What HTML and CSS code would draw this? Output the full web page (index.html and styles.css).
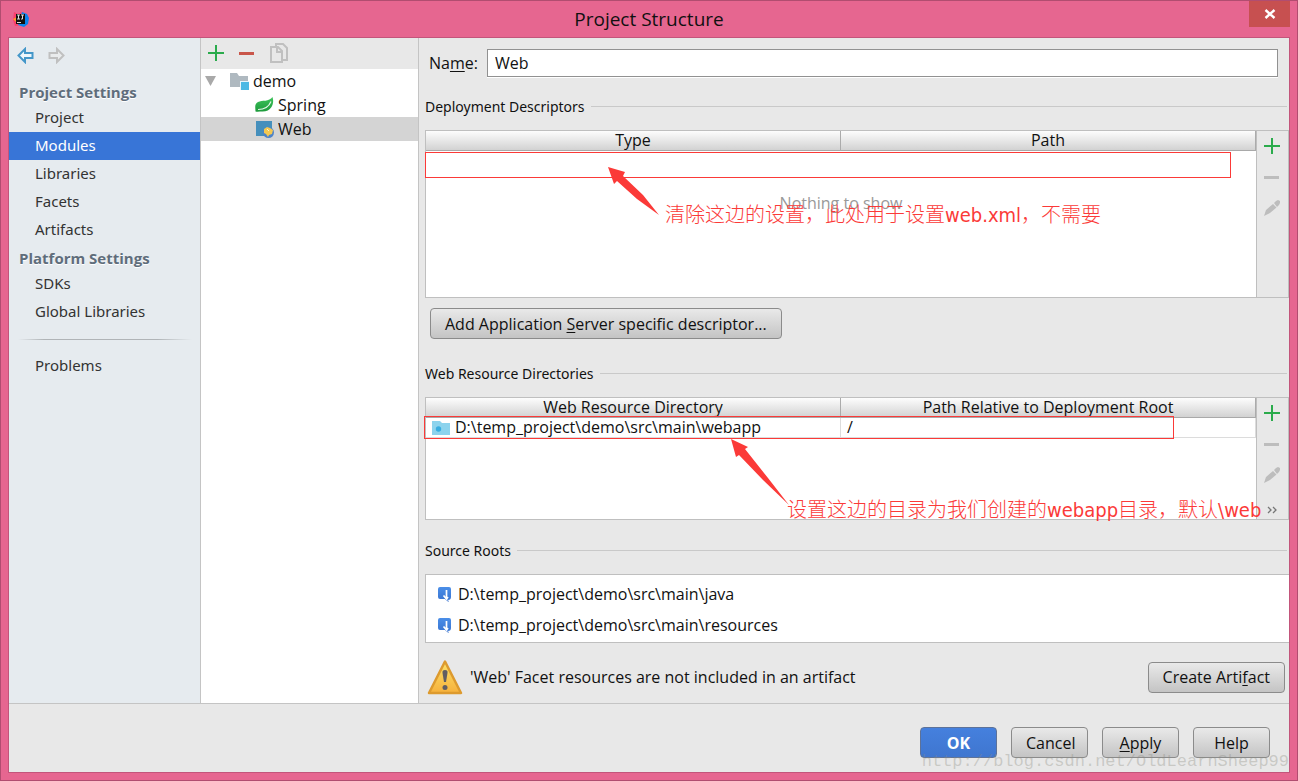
FILE: index.html
```html
<!DOCTYPE html>
<html lang="en">
<head>
<meta charset="utf-8">
<title>Project Structure</title>
<link rel="stylesheet" href="styles.css">
</head>
<body>
<svg class="defs" aria-hidden="true">
  <defs>
    <linearGradient id="blue" x1="0" y1="0" x2="0" y2="1"><stop offset="0" stop-color="#4a8ee8"/><stop offset="1" stop-color="#3873cf"/></linearGradient>
    <linearGradient id="amber" x1="0" y1="0" x2="0" y2="1"><stop offset="0" stop-color="#fde26a"/><stop offset="1" stop-color="#f6b13c"/></linearGradient>
    <linearGradient id="leaf" x1="0" y1="0" x2="0" y2="1"><stop offset="0" stop-color="#3fc45c"/><stop offset="1" stop-color="#1d9a3c"/></linearGradient>
  </defs>
  <symbol id="plus" viewBox="0 0 16 16"><path d="M7 0h2v7h7v2H9v7H7V9H0V7h7z" fill="#2bab4c"/></symbol>
  <symbol id="minus" viewBox="0 0 16 16"><path d="M0 7h15v3H0z" fill="currentColor"/></symbol>
  <symbol id="pencil" viewBox="0 0 16 16"><path d="M0 16l2-6 7-6 3.500 3.500L6 13zM10 3l2-2 2-1 2 1v2l-1 2-2 2z" fill="#bdbdbd"/></symbol>
  <symbol id="source" viewBox="0 0 14 16"><path d="M2 1h9q2 0 2 2v8q0 3-3 3l1 2-2-1-2-2H2q-2 0-2-2V3q0-2 2-2z" fill="url(#blue)"/><path d="M8.500 4v9L5.500 9.500M8.500 13L10 11" fill="none" stroke="#fff" stroke-width="1.700"/></symbol>
</svg>
<div class="window">
  <header class="titlebar">
    <svg class="app-icon" width="16" height="16" viewBox="0 0 16 16"><path d="M1 1l4 2 3-2 2 3v10l-8 1-2-6z" fill="#fb3e6c"/><path d="M0 8l4-2v6z" fill="#fb9b28"/><path d="M9 1l5 2 2 4-1 6-4 3-6-2z" fill="#0a83ee"/><path d="M3 3h9v10H3z" fill="#111"/><path d="M4 4h3M5.500 4v4M4 8h3M8 4h3M9.500 4v4H8M4 11.500h4" fill="none" stroke="#ddd"/></svg>
    <h1>Project Structure</h1>
    <button class="close" aria-label="Close"><svg width="12" height="10" viewBox="0 0 12 10"><path d="M1.500 1l9 8M10.500 1l-9 8" stroke="#fff" stroke-width="2.400"/></svg></button>
  </header>
  <div class="frame">
    <div class="panes">
      <nav class="sidebar">
        <div class="history">
          <button aria-label="Back"><svg width="17" height="17" viewBox="0 0 17 17"><path d="M1.500 8.500L8 2v4h7.500v5H8v4z" fill="#eef7fc" stroke="#4497c9" stroke-width="2"/></svg></button>
          <button aria-label="Forward" disabled><svg width="17" height="17" viewBox="0 0 17 17"><path d="M15.500 8.500L9 2v4H1.500v5H9v4z" fill="#eaeced" stroke="#c0c0c0" stroke-width="2"/></svg></button>
        </div>
        <h2>Project Settings</h2>
        <a href="#">Project</a>
        <a href="#" class="active">Modules</a>
        <a href="#">Libraries</a>
        <a href="#">Facets</a>
        <a href="#">Artifacts</a>
        <h2>Platform Settings</h2>
        <a href="#">SDKs</a>
        <a href="#">Global Libraries</a>
        <hr>
        <a href="#">Problems</a>
      </nav>
      <section class="tree">
        <div class="tree-tools">
          <button aria-label="Add"><svg width="16" height="16"><use href="#plus"/></svg></button>
          <button class="remove" aria-label="Remove"><svg width="16" height="16"><use href="#minus"/></svg></button>
          <button aria-label="Copy"><svg width="18" height="20" viewBox="0 0 18 20"><path d="M6 4V1h7l4 4v12h-4" fill="none" stroke="#c0c0c0" stroke-width="2"/><path d="M1 4h7l4 4v11H1zM7 4v5h5" fill="#e8e8e8" stroke="#c0c0c0" stroke-width="2"/></svg></button>
        </div>
        <ul>
          <li><svg class="twisty" width="11" height="10" viewBox="0 0 11 10"><path d="M0 0h11L5.500 10z" fill="#a9a9a9"/></svg><svg width="19" height="18" viewBox="0 0 19 18"><path d="M0 1h7l2 3h9v11H0z" fill="#afb9c0"/><path d="M10 9h9v9h-9z" fill="#e9f6fc"/><path d="M11 10h8v8h-8z" fill="#4db9e4"/></svg>demo</li>
          <li class="child"><svg width="19" height="18" viewBox="0 0 19 18"><path d="M17.500 1c1 3 1 7-1 10-2 3-5 4.500-9 4.500-2.500 0-5 .5-7 0C.5 12-1 8 3 6c4-2 11 0 14.500-5z" fill="url(#leaf)"/><path d="M3 13.500c6 0 11-3 13-8" fill="none" stroke="#e5f6e8" stroke-width="1.200"/></svg>Spring</li>
          <li class="child selected"><svg width="19" height="18" viewBox="0 0 19 18"><path d="M1 1h16v15H1z" fill="#458fbc"/><circle cx="13.500" cy="12.500" r="5.500" fill="#4d83c9"/><path d="M9 9l3-2 3 1 3 2-1 4-3 1-1 2-2-3-2-1z" fill="#f4c851"/><path d="M12 9l2 2" stroke="#fff5c8"/></svg>Web</li>
        </ul>
      </section>
      <main class="editor">
        <div class="name-row"><label for="name">Na<u>m</u>e:</label><input id="name" type="text" value="Web"></div>
        <h3>Deployment Descriptors</h3>
        <section class="box descriptors">
          <div class="grid">
            <table><thead><tr><th>Type</th><th>Path</th></tr></thead></table>
            <p class="empty">Nothing to show</p>
          </div>
          <div class="tools">
            <button aria-label="Add"><svg width="16" height="16"><use href="#plus"/></svg></button>
            <button aria-label="Remove" disabled><svg width="16" height="16"><use href="#minus"/></svg></button>
            <button aria-label="Edit" disabled><svg width="16" height="16"><use href="#pencil"/></svg></button>
          </div>
          <div class="mark mark-descriptors"></div>
          <svg class="arrow arrow-descriptors" width="54" height="52" viewBox="0 0 54 52"><path d="M1 1L18 6l-2 4 20 19 16 20-22-16-20-18-3 3z" fill="#fb3a38"/></svg>
          <p class="note note-descriptors">清除这边的设置，此处用于设置web.xml，不需要</p>
        </section>
        <button class="btn add-descriptor">Add Application <u>S</u>erver specific descriptor...</button>
        <h3>Web Resource Directories</h3>
        <section class="box resources">
          <div class="grid">
            <table>
              <thead><tr><th>Web Resource Directory</th><th>Path Relative to Deployment Root</th></tr></thead>
              <tbody><tr><td><span class="path"><svg width="18" height="14" viewBox="0 0 18 14"><path d="M0 0h8l2 2h8v12H0z" fill="#8cd3ed"/><circle cx="6.500" cy="8" r="2.700" fill="#38ade0"/></svg>D:\temp_project\demo\src\main\webapp</span></td><td>/</td></tr></tbody>
            </table>
          </div>
          <div class="tools">
            <button aria-label="Add"><svg width="16" height="16"><use href="#plus"/></svg></button>
            <button aria-label="Remove" disabled><svg width="16" height="16"><use href="#minus"/></svg></button>
            <button aria-label="Edit" disabled><svg width="16" height="16"><use href="#pencil"/></svg></button>
            <button class="more" aria-label="More"><svg width="10" height="8" viewBox="0 0 10 8"><path d="M1 1l3 3-3 3M6 1l3 3-3 3" fill="none" stroke="#777" stroke-width="1.300"/></svg></button>
          </div>
          <div class="mark mark-resources"></div>
          <svg class="arrow arrow-resources" width="60" height="68" viewBox="0 0 60 68"><path d="M1 1l17 8-3 2 23 29 21 27-26-25L9 17l-3 2z" fill="#fb3a38"/></svg>
          <p class="note note-resources">设置这边的目录为我们创建的webapp目录，默认\web</p>
        </section>
        <h3>Source Roots</h3>
        <ul class="roots">
          <li><svg width="14" height="16"><use href="#source"/></svg>D:\temp_project\demo\src\main\java</li>
          <li><svg width="14" height="16"><use href="#source"/></svg>D:\temp_project\demo\src\main\resources</li>
        </ul>
        <div class="warning">
          <svg width="36" height="36" viewBox="0 0 36 36"><path d="M18 2.500L34 34H2z" fill="url(#amber)" stroke="#dd9a2e" stroke-width="2.500" stroke-linejoin="round"/><path d="M18 11q3 0 2.500 3l-1.500 9h-2l-1.500-9q-.5-3 2.500-3z" fill="#625e62"/><circle cx="18" cy="28.500" r="2.500" fill="#625e62"/></svg>
          <span>'Web' Facet resources are not included in an artifact</span>
          <button class="btn">Create Arti<u>f</u>act</button>
        </div>
      </main>
    </div>
    <footer class="actions">
      <button class="btn primary">OK</button>
      <button class="btn">Cancel</button>
      <button class="btn"><u>A</u>pply</button>
      <button class="btn">Help</button>
      <span class="watermark">http://blog.csdn.net/OldLearnSheep99</span>
    </footer>
  </div>
</div>
</body>
</html>
```
FILE: styles.css
```css
* { box-sizing: border-box; }

body, h1, h2, h3, p, ul { margin: 0; padding: 0; }
ul { list-style: none; }

body {
  min-height: 100vh;
  display: flex;
  font: 16px/22px "Open Sans", "Noto Sans", sans-serif;
  color: #111;
}

button, input { font: inherit; color: inherit; }
button { border: 0; padding: 0; background: none; }
svg { display: block; flex: none; }
u { text-underline-offset: 2px; }
.defs { position: absolute; width: 0; height: 0; }

/* Window chrome */
.window {
  flex: 1;
  display: flex;
  flex-direction: column;
  padding: 0 7px 7px;
  border: 1px solid #b14d70;
  background: #e66690;
}
.titlebar {
  height: 36px;
  display: grid;
  grid-template-columns: 48px 1fr 48px;
  align-items: center;
}
.titlebar h1 { font-size: 19px; font-weight: 400; text-align: center; }
.app-icon { margin-left: 5px; }
.close {
  width: 41px;
  height: 26px;
  align-self: start;
  justify-self: end;
  display: grid;
  place-items: center;
  background: #c75050;
}
.frame {
  flex: 1;
  display: flex;
  flex-direction: column;
  border: 1px solid #c3557b;
  background: #e8e8e8;
}
.panes { flex: 1; display: grid; grid-template-columns: 192px 218px 1fr; }

/* Settings navigation */
.sidebar {
  display: flex;
  flex-direction: column;
  background: #e6ebef;
  border-right: 1px solid #c4c4c4;
}
.history { display: flex; align-items: flex-start; gap: 14px; height: 40px; padding: 9px 8px; }
.sidebar h2 {
  padding: 2px 0 0 10px;
  font-size: 15px;
  line-height: 24px;
  color: #5f6d7b;
  text-shadow: 0 1px #fff;
}
.sidebar a {
  padding: 0 0 2px 26px;
  font: 15px/26px "Noto Sans", sans-serif;
  color: #333;
  text-decoration: none;
}
.sidebar .active { background: #3875d7; color: #fff; }
.sidebar hr {
  width: 174px;
  height: 1px;
  margin: 13px auto 12px;
  border: 0;
  background: linear-gradient(90deg, transparent, #b0b4b7 15%, #b0b4b7 80%, transparent);
}

/* Module tree */
.tree { background: #fff; border-right: 1px solid #c4c4c4; }
.tree-tools {
  display: flex;
  align-items: center;
  gap: 15px;
  height: 31px;
  padding: 0 0 1px 7px;
  background: #e8e8e8;
}
.remove { color: #c9564a; }
.tree li { display: flex; align-items: center; gap: 4px; height: 24px; padding-left: 4px; }
.tree .twisty { margin-right: 10px; }
.tree .child { padding-left: 54px; }
.tree .selected { background: #d4d4d4; }

/* Facet editor */
.editor { display: flex; flex-direction: column; min-width: 0; padding: 11px 0 8px 6px; }
.name-row { display: flex; align-items: center; gap: 9px; margin: 0 11px 19px 4px; }
.name-row input {
  flex: 1;
  height: 28px;
  padding: 0 7px;
  border: 1px solid #919191;
  background: #fff;
  box-shadow: 0 1px #fff;
}
.editor h3 {
  display: flex;
  align-items: center;
  gap: 6px;
  margin-bottom: 12px;
  font: 14px/22px "Noto Sans", sans-serif;
}
.editor h3::after { content: ""; flex: 1; height: 1px; margin: 0 2px 2px 0; background: #c9c9c9; }

.box { position: relative; display: flex; border: 1px solid #bfbfbf; }
.descriptors { flex: 1 0 168px; margin-bottom: 10px; }
.resources { height: 123px; margin-bottom: 20px; }
.grid { flex: 1; background: #fff; border-right: 1px solid #bfbfbf; }
.grid table { width: 100%; table-layout: fixed; border-collapse: separate; border-spacing: 0; }
.grid th {
  height: 20px;
  padding: 0;
  line-height: 19px;
  font-weight: 400;
  background: linear-gradient(#fdfdfd, #d2d2d2);
  border-right: 1px solid #ababab;
  border-bottom: 1px solid #a9a9a9;
}
.grid td {
  height: 20px;
  padding: 0 6px;
  line-height: 19px;
  border-right: 1px solid #dcdcdc;
  border-bottom: 1px solid #dcdcdc;
}
.path { display: flex; align-items: center; gap: 5px; }
.empty { margin-top: 41px; text-align: center; color: #999; }
.tools {
  width: 31px;
  display: flex;
  flex-direction: column;
  align-items: center;
  gap: 15px;
  padding: 7px 1px 0 0;
}
.tools button:disabled { color: #bdbdbd; }
.tools .more { margin-top: 8px; }

/* Annotations laid over the tables */
.mark { position: absolute; border: 1px solid #fb3a38; }
.mark-descriptors { left: -1px; right: 57px; top: 21px; height: 26px; }
.mark-resources { left: -2px; right: 114px; top: 18px; height: 23px; }
.arrow { position: absolute; }
.arrow-descriptors { left: 181px; top: 35px; }
.arrow-resources { left: 304px; top: 40px; }
.note {
  position: absolute;
  font: 300 20px/28px "DejaVu Sans Condensed", "Noto Sans CJK SC", sans-serif;
  white-space: nowrap;
  color: #fb3a38;
}
.note-descriptors { left: 239px; top: 70px; }
.note-resources { left: 361px; top: 98px; }

.btn {
  height: 31px;
  padding: 0 14px;
  border: 1px solid #8b8b8b;
  border-radius: 4px;
  background: linear-gradient(#e9e9e9, #c4c4c4);
}
.add-descriptor { align-self: flex-start; margin: 0 0 24px 5px; }
.roots { padding: 3px 12px 2px; margin-bottom: 16px; border: 1px solid #bfbfbf; border-right: 0; background: #fff; }
.roots li { display: flex; align-items: center; gap: 6px; height: 31px; }
.warning { display: flex; align-items: center; gap: 7px; padding: 0 4px 0 2px; }
.warning span { flex: 1; }

.actions {
  position: relative;
  display: flex;
  justify-content: flex-end;
  gap: 14px;
  height: 69px;
  padding: 23px 19px 0 0;
  border-top: 1px solid #c4c4c4;
}
.actions .btn { width: 77px; }
.actions .primary {
  font-weight: 700;
  color: #fff;
  border-color: #5d7299;
  background: linear-gradient(#4580de, #3f76cf);
}
.watermark {
  position: absolute;
  right: 0;
  bottom: 0;
  font: 17px/20px "Liberation Mono", monospace;
  color: rgba(140, 140, 130, .35);
  pointer-events: none;
}
```
